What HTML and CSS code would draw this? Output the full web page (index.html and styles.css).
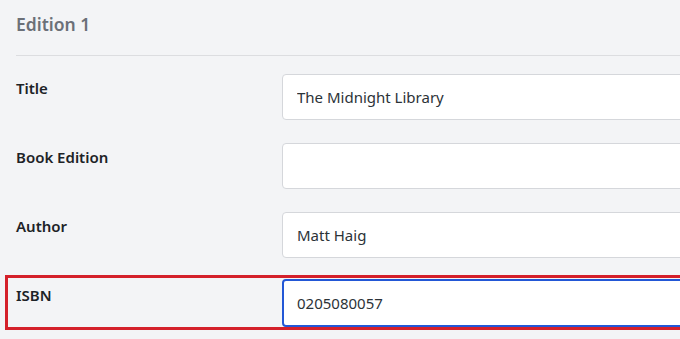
FILE: index.html
```html
<!DOCTYPE html>
<html>
<head>
<meta charset="utf-8">
<link rel="stylesheet" href="styles.css">
</head>
<body>
<div class="page">
  <div class="heading">Edition 1</div>
  <div class="rows">
    <div class="row">
      <label class="label">Title</label>
      <div class="field"><input class="input" type="text" value="The Midnight Library"></div>
    </div>
    <div class="row">
      <label class="label">Book Edition</label>
      <div class="field"><input class="input" type="text" value=""></div>
    </div>
    <div class="row">
      <label class="label">Author</label>
      <div class="field"><input class="input" type="text" value="Matt Haig"></div>
    </div>
    <div class="row row-highlight">
      <label class="label">ISBN</label>
      <div class="field"><input class="input input-focus" type="text" value="0205080057"></div>
      <div class="annotation"></div>
    </div>
  </div>
</div>
</body>
</html>
```
FILE: styles.css
```css
html, body {
  margin: 0;
  padding: 0;
  background: #f3f4f6;
  overflow: hidden;
}
body {
  width: 680px;
  height: 339px;
  font-family: "Noto Sans", "Open Sans", sans-serif;
}
.page {
  padding-left: 16px;
}
.heading {
  height: 56px;
  box-sizing: border-box;
  padding-top: 11px;
  font-size: 17.5px;
  font-weight: 600;
  line-height: 26px;
  color: #6b7078;
  border-bottom: 1px solid #dcdde0;
}
.rows {
  display: flex;
  flex-direction: column;
  gap: 23px;
  padding-top: 18px;
}
.row {
  position: relative;
  display: grid;
  grid-template-columns: 266px 1fr;
  height: 46px;
}
.label {
  font-size: 15px;
  font-weight: 600;
  color: #1d2327;
  line-height: 24px;
  padding-top: 2px;
}
.field {
  display: flex;
}
.input {
  width: 520px;
  height: 46px;
  box-sizing: border-box;
  margin: 0;
  border: 1px solid #d5d7db;
  border-radius: 4px;
  background: #ffffff;
  padding: 0 14px;
  font-family: "Noto Sans", "Open Sans", sans-serif;
  font-size: 15px;
  color: #2c3338;
  outline: none;
}
.input-focus {
  border: 2px solid #2257d6;
  padding: 0 13px;
  margin-top: -2px;
  height: 48px;
}
.annotation {
  position: absolute;
  left: -11px;
  top: -6px;
  width: 700px;
  height: 55px;
  box-sizing: border-box;
  border: 3px solid #d4202a;
  pointer-events: none;
}
```
